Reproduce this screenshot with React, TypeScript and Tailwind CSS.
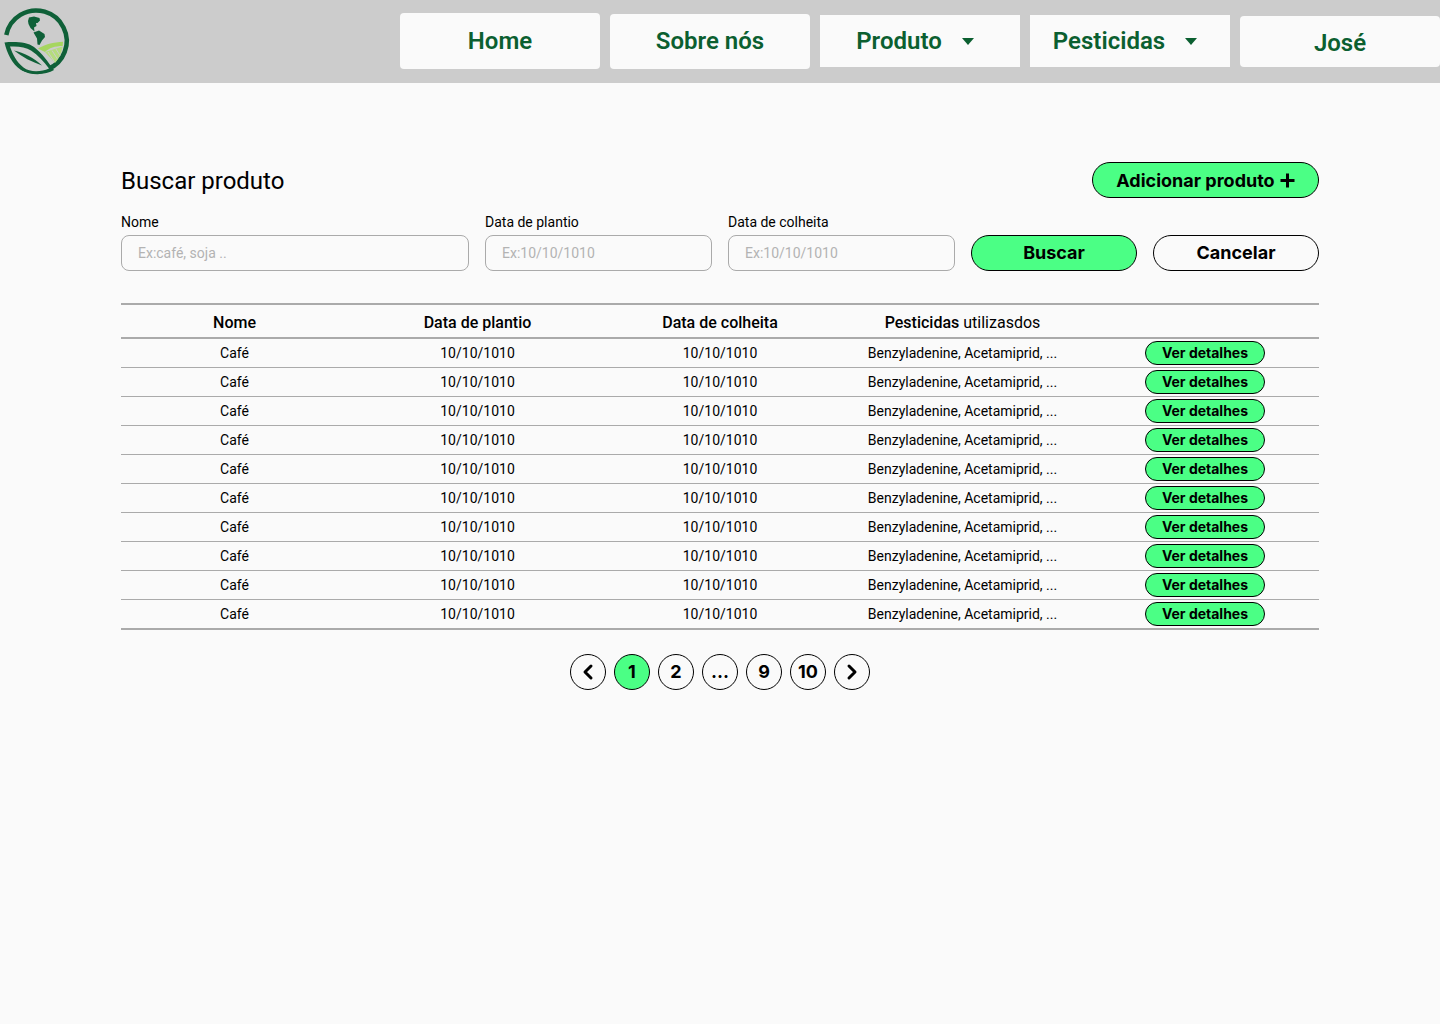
import { ChevronLeft, ChevronRight } from "lucide-react";

const rows = Array.from({ length: 10 }, (_, i) => i);
const pages = ["1", "2", "...", "9", "10"];

const Logo = () => (
  <svg width="72" height="83" viewBox="0 0 72 83" fill="none" className="shrink-0">
    <path d="M6.3 35 A30.5 30.5 0 1 1 23 68.5" stroke="#0f6038" strokeWidth="4.5" />
    <path d="M4.5 42.5 C15 41.5 27 42 34 47 C42 53 48 62 54 70 C46 75 31 76 21 70 C12 64 7 53 4.5 42.5 Z" fill="#0f6038" />
    <path d="M10 46.5 C18 46 26 47 31 50.5 C38 55 44 62 49 68.5 C41 72 30 72.5 23.5 67.5 C16.5 62 12.5 54 10 46.5 Z" fill="#cccccc" />
    <path d="M14 50.5 C24 52.5 34 58 42 65.5 C32 62 22 57 14 50.5 Z" fill="#0f6038" />
    <path d="M38 48.5 C44 45 54 42 63 41.8 L62.7 46 C55 46 49 48 45 52 Z" fill="#a6d65f" />
    <path d="M45 52 L62.5 46.5 C61.5 53 59 58.5 55 63 Z" fill="#b5dc7d" />
    <path d="M48 52 L54.5 62 M52 50.5 L57.5 59 M56 49 L60 55.5" stroke="#cccccc" strokeWidth="1" />
    <path d="M28 21 L29 17.5 L34 16.5 L39.5 18 L40 20.5 L37.5 23 L36 23 L36.5 26 L34 27.5 L34.5 31.5 L30.5 28 L28.5 24 Z" fill="#0f6038" />
    <path d="M33.5 32.5 L39 30.5 L44.5 34 L45 37 L42 40.5 L39.5 45 L37.5 44.5 L37 38.5 Z" fill="#0f6038" />
  </svg>
);

const Caret = () => (
  <span className="h-0 w-0 border-x-[6px] border-t-[7px] border-x-transparent border-t-[#0b5f30]" />
);

const Field = ({ label, hint, className }: { label: string; hint: string; className: string }) => (
  <div className={`flex flex-col gap-[5px] ${className}`}>
    <label className="text-sm leading-[16px] text-black">{label}</label>
    <input
      placeholder={hint}
      className="h-9 w-full rounded-lg border border-[#aaaaaa] bg-transparent px-4 text-sm text-black outline-none placeholder:text-[#b3b3b3]"
    />
  </div>
);

const rowCols = "grid grid-cols-[227px_259px_226px_259px_227px] items-center text-center";

export default function App() {
  return (
    <div className="min-h-[1024px] bg-[#fafafa] font-['Roboto',sans-serif] text-black">
      <header className="flex h-[83px] items-center bg-[#cccccc]">
        <div className="mr-auto">
          <Logo />
        </div>
        <nav className="flex items-center gap-[10px] pb-[1px] text-2xl font-semibold text-[#0b5f30]">
          <a className="flex h-14 w-[200px] items-center justify-center rounded bg-[#fafafa]">Home</a>
          <a className="flex h-[55px] w-[200px] items-center justify-center rounded bg-[#fafafa]">Sobre nós</a>
          <a className="flex h-[52px] w-[200px] items-center justify-center gap-5 bg-[#fafafa] pr-[10px]">
            Produto <Caret />
          </a>
          <a className="flex h-[52px] w-[200px] items-center justify-center gap-5 bg-[#fafafa] pr-[10px]">
            Pesticidas <Caret />
          </a>
          <a className="mt-[1px] flex h-[51px] w-[200px] items-center justify-center rounded bg-[#fafafa] pt-[3px]">José</a>
        </nav>
      </header>

      <main className="mx-[121px] pt-[79px]">
        <div className="flex h-9 items-center justify-between">
          <h1 className="pt-[2px] text-2xl leading-9">Buscar produto</h1>
          <button className="flex h-9 w-[227px] items-center justify-center gap-[5px] rounded-full border border-black bg-[#4bff85] pt-[1px] font-['Inter',sans-serif] text-lg font-bold">
            Adicionar produto
            <svg width="15" height="15" viewBox="0 0 15 15">
              <path d="M7.5 0.5v14M0.5 7.5h14" stroke="black" strokeWidth="3" />
            </svg>
          </button>
        </div>

        <div className="mt-4 flex items-end gap-4">
          <Field label="Nome" hint="Ex:café, soja .." className="w-[348px]" />
          <Field label="Data de plantio" hint="Ex:10/10/1010" className="w-[227px]" />
          <Field label="Data de colheita" hint="Ex:10/10/1010" className="w-[227px]" />
          <button className="h-9 w-[166px] rounded-full border border-black bg-[#4bff85] font-['Inter',sans-serif] text-lg font-bold">
            Buscar
          </button>
          <button className="h-9 w-[166px] rounded-full border border-black font-['Inter',sans-serif] text-lg font-bold">
            Cancelar
          </button>
        </div>

        <section className="mt-8 border-y-2 border-[#aaaaaa]">
          <div className={`${rowCols} h-[34px] border-b-2 border-[#aaaaaa] pt-1 text-base font-medium`}>
            <div>Nome</div>
            <div>Data de plantio</div>
            <div>Data de colheita</div>
            <div>
              Pesticidas <span className="font-normal">utilizasdos</span>
            </div>
            <div />
          </div>
          {rows.map((i) => (
            <div key={i} className={`${rowCols} h-[29px] border-b border-[#aaaaaa] text-sm last:h-[28px] last:border-b-0`}>
              <div>Café</div>
              <div>10/10/1010</div>
              <div>10/10/1010</div>
              <div>Benzyladenine, Acetamiprid, ...</div>
              <div className="flex justify-center pr-[1px]">
                <button className="h-6 w-[120px] rounded-full border border-black bg-[#4bff85] font-['Inter',sans-serif] text-sm font-bold leading-[22px]">
                  Ver detalhes
                </button>
              </div>
            </div>
          ))}
        </section>

        <div className="mt-6 flex justify-center gap-2 font-['Inter',sans-serif] text-lg font-bold">
          <button className="flex size-9 items-center justify-center rounded-full border border-black">
            <ChevronLeft size={24} strokeWidth={3} />
          </button>
          {pages.map((p, i) => (
            <button
              key={p}
              className={
                i === 0
                  ? "flex size-9 items-center justify-center rounded-full border border-black bg-[#4bff85]"
                  : "flex size-9 items-center justify-center rounded-full border border-black"
              }
            >
              {p}
            </button>
          ))}
          <button className="flex size-9 items-center justify-center rounded-full border border-black">
            <ChevronRight size={24} strokeWidth={3} />
          </button>
        </div>
      </main>
    </div>
  );
}
